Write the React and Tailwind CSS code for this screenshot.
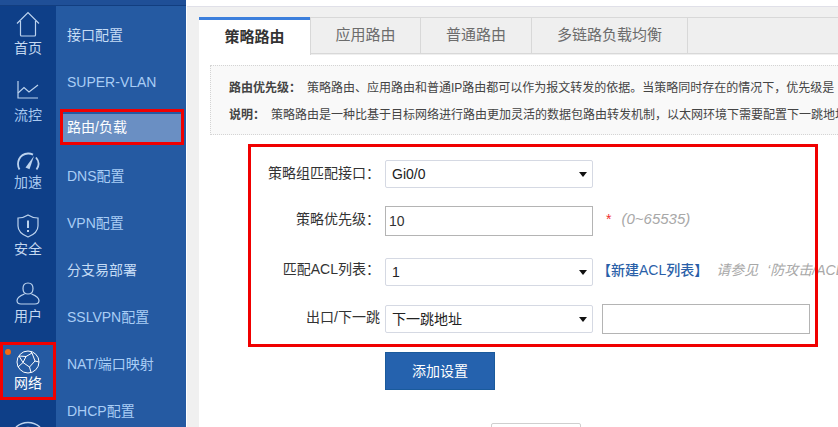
const F = "font-['Liberation_Sans','Noto_Sans_CJK_SC',sans-serif]";

function Home() {
  return (
    <svg width="24" height="26" viewBox="0 0 24 26" fill="none" stroke="#bcd3ee" strokeWidth="1.2">
      <path d="M1 12.5 L12 1.5 L23 12.5 M4.5 10 V24 C4.5 24.6 5 25 5.5 25 H18.5 C19 25 19.5 24.6 19.5 24 V10" />
    </svg>
  );
}
function Chart() {
  return (
    <svg width="22" height="18" viewBox="0 0 22 18" fill="none" stroke="#bcd3ee" strokeWidth="1.2">
      <path d="M1 0 V17 H21" />
      <path d="M1 12 L7 6.5 L12 11 L21 4" />
    </svg>
  );
}
function Gauge() {
  return (
    <svg width="24" height="20" viewBox="0 0 24 20" fill="none" stroke="#bcd3ee" strokeWidth="1.8">
      <path d="M3.5 18.5 C0 12 3 3 12 2.5 C14 2.4 15.5 2.9 17 3.6 M20 6.5 C23 10 23.4 14.5 20.5 18.5" />
      <path d="M9.5 16.5 L18 5 L13.5 18.2 Z" fill="#bcd3ee" stroke="none" />
    </svg>
  );
}
function Shield() {
  return (
    <svg width="22" height="24" viewBox="0 0 22 24" fill="none" stroke="#bcd3ee" strokeWidth="1.2">
      <path d="M11 1 C14 3 17.5 4 21 4 V12 C21 17 16 21 11 23 C6 21 1 17 1 12 V4 C4.5 4 8 3 11 1 Z" />
      <path d="M11 6.5 V14 M11 16 V18" strokeWidth="2" />
    </svg>
  );
}
function User() {
  return (
    <svg width="24" height="23" viewBox="0 0 24 23" fill="none" stroke="#bcd3ee" strokeWidth="1.2">
      <path d="M12 1 C8.5 1 7 3.6 7 6.4 C7 9.4 8.6 12 12 12 C15.4 12 17 9.4 17 6.4 C17 3.6 15.5 1 12 1 Z" />
      <path d="M8.5 12 C4.5 13.6 1 15.5 1 18.5 C1 21 3 22 5 22 H19 C21 22 23 21 23 18.5 C23 15.5 19.5 13.6 15.5 12" />
    </svg>
  );
}
function Globe() {
  return (
    <svg width="24" height="24" viewBox="0 0 24 24" fill="none" stroke="#ffffff" strokeWidth="1">
      <circle cx="12" cy="12" r="11" />
      <path d="M3 6 L10 6.5 L16 3 L19 11 L13.5 17 L7 12.5 L10 6.5 M19 11 L23 12 M13.5 17 L15 22.5 M7 12.5 L2 17 M7 12.5 L3 6 M16 3 L14 1.2" />
    </svg>
  );
}
function Wifi() {
  return (
    <svg width="26" height="20" viewBox="0 0 26 20" fill="none" stroke="#bcd3ee" strokeWidth="1.6">
      <path d="M1 7 C8 1 18 1 25 7 M4.5 11 C9.5 6.5 16.5 6.5 21.5 11 M8.5 15 C11.5 12.6 14.5 12.6 17.5 15" />
    </svg>
  );
}

function NavItem({ icon, label, h, tone, pad, dot }) {
  return (
    <div className={`relative flex flex-col items-center shrink-0 ${h} ${tone}`}>
      {dot && <span className="absolute left-[5px] top-[7px] w-[6px] h-[6px] rounded-full bg-[#f26a12]" />}
      <div className={`flex justify-center items-center h-[31px] ${pad}`}>{icon}</div>
      {label && <span className="text-[14px] leading-[20px]">{label}</span>}
    </div>
  );
}

function Sub({ children, active, light }) {
  return (
    <div className={`h-[47px] shrink-0 flex items-center pl-[11px] text-[14px] ${active ? "text-white" : light ? "text-[#c6dcf5]" : "text-[#a9cdf5]"}`}>
      <span className={active ? "flex items-center w-[118px] h-[30px] bg-[#6a8fc3] -ml-[4px] pl-[4px] pb-[2px] -mt-[2px]" : ""}>{children}</span>
    </div>
  );
}

function Select({ value }) {
  return (
    <div className="w-[208px] h-[28px] shrink-0 flex items-center justify-between bg-white border border-[#d5d9e3] rounded-[2px] pl-[6px] pr-[5px] text-[14px] text-[#222]">
      <span>{value}</span>
      <svg width="8" height="5" viewBox="0 0 8 5"><path d="M0 0 H8 L4 5 Z" fill="#111" /></svg>
    </div>
  );
}

function Tab({ children, w }) {
  return (
    <div className={`${w} h-[37px] shrink-0 flex items-center justify-center text-[15px] text-[#6c6c6c] border-r border-b border-t border-[#d8d8d8]`}>
      {children}
    </div>
  );
}

function Label({ children, shift }) {
  return <div className={`w-[131px] shrink-0 text-right text-[14px] text-[#333] pr-[5px] ${shift}`}>{children}</div>;
}

export default function App() {
  const soft = "text-[#c4d8f0]";
  const blue = "text-[#a9c9f0]";
  return (
    <div className={`relative w-[838px] h-[427px] overflow-hidden flex bg-[#f0f0f0] ${F}`}>
      <aside className="w-[187px] h-full shrink-0 flex flex-col border-r border-white">
        <div className="h-[6px] shrink-0 bg-[#1f4f97] border-b border-[#123e80]" />
        <div className="flex flex-1 min-h-0">
          <nav className="w-[56px] shrink-0 bg-[#0e3f88] flex flex-col overflow-hidden pt-[1px]">
            <NavItem h="h-[67px]" tone={soft} pad="pt-[3px]" icon={<Home />} label="首页" />
            <NavItem h="h-[67px]" tone={blue} pad="pt-[1px]" icon={<Chart />} label="流控" />
            <NavItem h="h-[67px]" tone={blue} pad="pt-[9px]" icon={<Gauge />} label="加速" />
            <NavItem h="h-[67px]" tone={soft} pad="pt-[5px]" icon={<Shield />} label="安全" />
            <NavItem h="h-[67px]" tone={soft} pad="pt-[5px]" icon={<User />} label="用户" />
            <NavItem h="h-[58px]" tone="bg-[#255aa2] text-white" dot pad="pt-[9px]" icon={<Globe />} label="网络" />
            <NavItem h="h-[60px]" tone={blue} pad="pt-[28px]" icon={<Wifi />} />
          </nav>
          <div className="flex-1 bg-[#255aa2] flex flex-col overflow-hidden pt-[6px]">
            <Sub light>接口配置</Sub>
            <Sub>SUPER-VLAN</Sub>
            <Sub active>路由/负载</Sub>
            <Sub>DNS配置</Sub>
            <Sub>VPN配置</Sub>
            <Sub light>分支易部署</Sub>
            <Sub>SSLVPN配置</Sub>
            <Sub>NAT/端口映射</Sub>
            <Sub>DHCP配置</Sub>
          </div>
        </div>
      </aside>

      <main className="flex-1 min-w-0 flex flex-col">
        <div className="h-[7px] shrink-0 bg-white border-b border-[#e0e0e8]" />
        <div className="flex-1 min-h-0 pl-[12px] pt-[10px]">
          <div className="h-full bg-white overflow-hidden">
            <div className="flex h-[38px] bg-[#efefef]">
              <div className="w-[111px] h-[38px] shrink-0 bg-white border-t-[3px] border-[#3c7fdc] flex items-center justify-center text-[15px] font-bold text-[#333]">
                策略路由
              </div>
              <div className="flex border-l border-[#d8d8d8]">
                <Tab w="w-[110px]">应用路由</Tab>
                <Tab w="w-[111px]">普通路由</Tab>
                <Tab w="w-[156px]">多链路负载均衡</Tab>
              </div>
              <div className="flex-1 h-[37px] border-t border-b border-[#d8d8d8]" />
            </div>

            <div className="ml-[11px] mt-[10px] w-[700px] h-[70px] border border-dotted border-[#d4d4d4] bg-[#f9f9f9] pl-[18px] pt-[9px] text-[12px] leading-[27px] text-[#444] whitespace-nowrap overflow-hidden">
              <div><b className="mr-[6px]">路由优先级：</b>策略路由、应用路由和普通IP路由都可以作为报文转发的依据。当策略同时存在的情况下，优先级是</div>
              <div><b className="mr-[6px]">说明：</b>策略路由是一种比基于目标网络进行路由更加灵活的数据包路由转发机制，以太网环境下需要配置下一跳地址</div>
            </div>

            <div className="ml-[186px] mt-[25px] flex flex-col items-start">
              <div className="flex items-center h-[28px] -ml-[131px]">
                <Label shift="-mt-[2px]">策略组匹配接口：</Label>
                <Select value="Gi0/0" />
              </div>
              <div className="flex items-center h-[30px] mt-[18px] -ml-[131px]">
                <Label shift="-mt-[3px]">策略优先级：</Label>
                <div className="w-[208px] h-[30px] shrink-0 border border-[#b4b4b4] pl-[3px] flex items-center text-[14px] text-[#333]">10</div>
                <span className="ml-[13px] text-[14px] text-[#f03030] -mt-[3px]">*</span>
                <span className="ml-[10px] text-[15px] italic text-[#a8a8a8] -mt-[3px]">(0~65535)</span>
              </div>
              <div className="flex items-center h-[28px] mt-[22px] -ml-[131px] whitespace-nowrap">
                <Label shift="-mt-[6px]">匹配ACL列表：</Label>
                <Select value="1" />
                <span className="ml-[4px] text-[14px] text-[#2a5fa8] font-medium -mt-[4px]">【新建ACL列表】</span>
                <span className="ml-[15px] text-[14px] italic text-[#a8a8a8] -mt-[4px] -translate-x-[7px]">请参见</span>
                <span className="ml-[2px] text-[14px] italic text-[#a8a8a8] -mt-[4px]">‘防攻击/ACL’</span>
              </div>
              <div className="flex items-center h-[28px] mt-[19px] -ml-[131px]">
                <Label shift="-mt-[4px]">出口/下一跳</Label>
                <Select value="下一跳地址" />
                <div className="ml-[9px] w-[208px] h-[30px] shrink-0 border border-[#b4b4b4]" />
              </div>
              <button className="mt-[19px] w-[110px] h-[38px] bg-[#2562ae] border border-[#1a5a9c] text-white text-[14px]">添加设置</button>
              <div className="ml-[106px] mt-[33px] w-[90px] h-[20px] bg-white border border-[#cfcfcf] rounded-[2px]" />
            </div>
          </div>
        </div>
      </main>

      <div className="absolute left-[60px] top-[109px] w-[124px] h-[36px] border-[3px] border-[#f00000] pointer-events-none" />
      <div className="absolute left-0 top-[342px] w-[56px] h-[58px] border-[3px] border-[#f00000] pointer-events-none" />
      <div className="absolute left-[248px] top-[144px] w-[570px] h-[203px] border-[3px] border-[#f00000] pointer-events-none" />
    </div>
  );
}
